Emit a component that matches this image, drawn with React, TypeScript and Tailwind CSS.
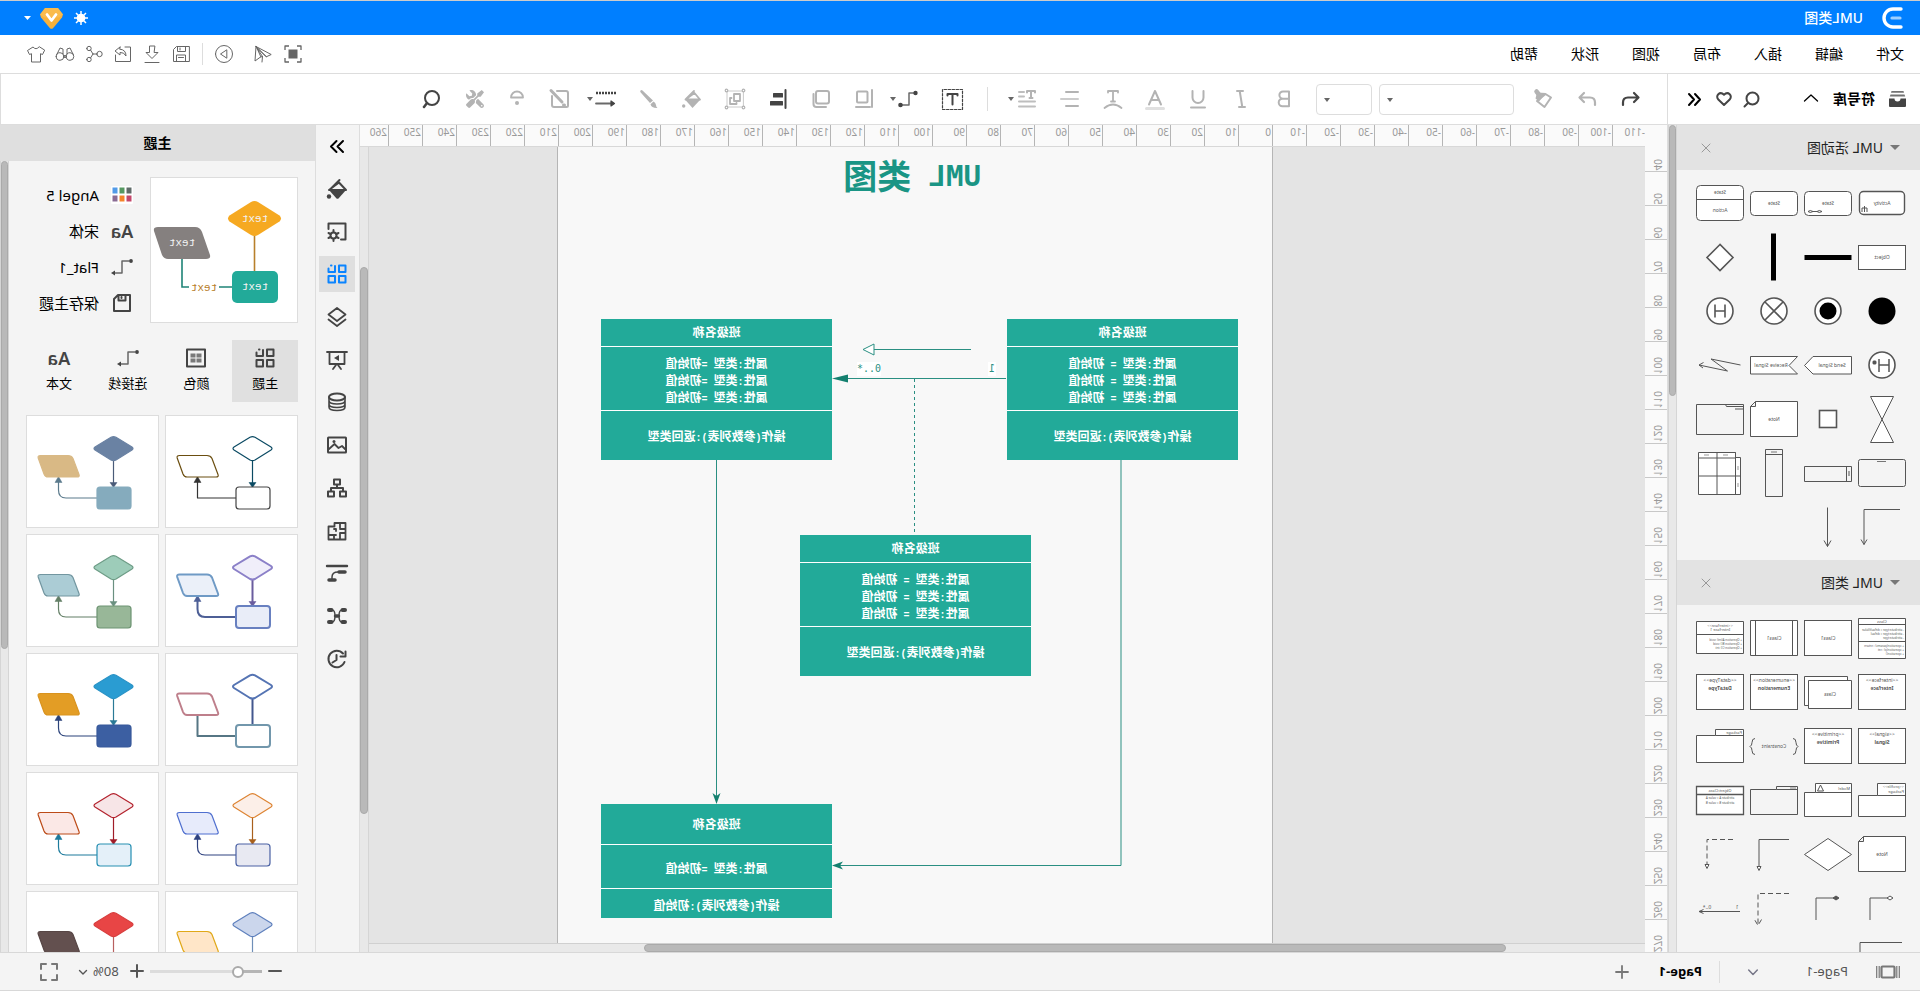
import type { FC, ReactNode } from 'react'
import { FaTools } from 'react-icons/fa'

type IconProps = {
  children: ReactNode,
  size?: string,
  box?: string,
  width?: number,
}

const Icon: FC<IconProps> = ({ children, size = 'size-5', box = '0 0 20 20', width = 2 }) => (
  <svg
    className={`${size} shrink-0 overflow-visible`}
    viewBox={box}
    fill="none"
    stroke="currentColor"
    strokeWidth={width}
    strokeLinecap="round"
    strokeLinejoin="round"
    aria-hidden="true"
  >
    {children}
  </svg>
)

const Caret: FC = () => (
  <svg className="h-1 w-1.5 shrink-0 text-[#666]" viewBox="0 0 6 4" fill="currentColor" aria-hidden="true">
    <path d="M0 0h6L3 4z" />
  </svg>
)

const fill = { fill: 'currentColor', stroke: 'none' }

/* ---------- title bar and menu ---------- */

const TitleBar: FC = () => (
  <header className="flex h-[35px] shrink-0 items-center border-t border-[#ccc] bg-[#007fff] pr-6 pl-[17px] text-white">
    <svg className="h-[22px] w-[21px]" viewBox="0 0 21 22" fill="none" stroke="#fff" strokeLinecap="round" aria-hidden="true">
      <path d="M2 2h8a9 9 0 0 1 0 18H2" strokeWidth="3.4" />
      <path d="M3 11h8" strokeWidth="3.2" stroke="#9fd0ff" />
    </svg>
    <h1 className="ml-[19px] flex-1 text-sm leading-5 font-medium">UML类图</h1>
    <button aria-label="亮度" className="mr-[11px]">
      <svg className="size-3.5" viewBox="0 0 14 14" stroke="#fff" strokeWidth="1.5" aria-hidden="true">
        <circle cx="7" cy="7" r="3.6" fill="#fff" />
        <path d="M7 0v14M0 7h14M2 2l10 10M12 2L2 12" />
      </svg>
    </button>
    <button aria-label="会员" className="mr-[9px]">
      <svg className="h-[21px] w-[23px]" viewBox="0 0 23 21" aria-hidden="true">
        <path d="M5 0h13l5 6.5-1 3-9 10.800q-1.500 1-3 0L1 9.500 0 6.500z" fill="#f7b13c" />
        <path d="M5 0h13l5 6.500-4 3H4L0 6.500z" fill="#fcc257" opacity=".6" />
        <path d="M7 6.500l4.500 6 4.500-6" fill="none" stroke="#fff" strokeWidth="2.800" strokeLinecap="round" strokeLinejoin="round" />
      </svg>
    </button>
    <button aria-label="更多">
      <svg className="h-1 w-[7px]" viewBox="0 0 7 4" fill="#fff" aria-hidden="true"><path d="M0 0h7L3.500 4z" /></svg>
    </button>
  </header>
)

const menus = ['文件', '编辑', '插入', '布局', '视图', '形状', '帮助']

const menuIcons = [
  {
    name: '专注', art: <>
      <path d="M1 5V1h4M13 1h4v4M17 13v4h-4M5 17H1v-4" strokeWidth="1.3" strokeLinecap="butt" />
      <rect x="4.5" y="4.5" width="9" height="9" {...fill} />
    </>,
  },
  { name: '发送', art: <path d="M17 9.500L1 9.500M1 9.500L17 1.500l-2 15-5-4.500zM1 9.500l5 2.500M17 1.500L7 12.500v4l3-4.500" opacity="0" /> },
  { name: '演示', art: <><circle cx="9" cy="9" r="8.5" /><path d="M6.500 5l6 4-6 4z" /></> },
  { name: '保存', art: <path d="M1 1.500h12.500l3 3v12H1zM4.500 1.500v5h8v-5M10 3v2M4.500 16.500V10h9v6.500M6.500 12.500h5" /> },
  { name: '下载', art: <path d="M6.500 1h5v6.500h3.500L9 13.500 3 7.500h3.500zM2 17.500h14" /> },
  { name: '导出', art: <path d="M7 2H1.500v14.500h15V10M12 2l5 4-5 4V7.500q-4-.5-6 3.500 0-6.500 6-6.800z" /> },
  { name: '分享', art: <><circle cx="3.500" cy="9" r="2.700" /><circle cx="14" cy="3.500" r="2.200" /><circle cx="14" cy="14.500" r="2.200" /><path d="M6 9h4M10 9l2.500-4M10 9l2.500 4" /></> },
  { name: '查找', art: <><circle cx="4" cy="11.500" r="3.800" /><circle cx="14" cy="11.500" r="3.800" /><circle cx="9" cy="11.500" r="1.200" /><path d="M.8 9.500L4 3l3 1v5M17.200 9.500L14 3l-3 1v5" /></> },
  { name: '皮肤', art: <path d="M6 2q3 3.500 6 0l5.500 3.500-2 4-2-.8V17h-9V8.700l-2 .8-2-4z" /> },
]

// paper plane: its tip points to the lower left
menuIcons[1].art = <path d="M16 1.500L.8 9.500l4.700 2.200zM16 1.500l1 14.500-5.500-4zM5.500 11.700L16 1.500 9.500 11.500l.5 5.500M9.500 11.500l2 .5" />

const MenuButton: FC<{ item: (typeof menuIcons)[number] }> = ({ item }) => (
  <button aria-label={item.name} className="text-[#666]">
    <Icon size="size-[18px]" box="0 0 18 18" width={1}>{item.art}</Icon>
  </button>
)

const MenuBar: FC = () => (
  <div className="flex h-[39px] shrink-0 items-center justify-between border-b border-[#ddd] bg-white pr-[27px] pl-4">
    <nav className="flex gap-[33px] text-sm">
      {menus.map((m) => <button key={m}>{m}</button>)}
    </nav>
    <div className="flex items-center">
      <div className="flex gap-3">
        {menuIcons.slice(0, 2).map((i) => <MenuButton key={i.name} item={i} />)}
      </div>
      <div className="mr-3 ml-[21px] flex"><MenuButton item={menuIcons[2]} /></div>
      <div className="mr-3 h-[22px] w-px bg-[#ddd]" />
      <div className="flex gap-[11px]">
        {menuIcons.slice(3).map((i) => <MenuButton key={i.name} item={i} />)}
      </div>
    </div>
  </div>
)

/* ---------- toolbar ---------- */

type Tool = {
  name: string,
  art: ReactNode,
  dark?: boolean,
  caret?: boolean,
}

const textTools: Tool[] = [
  { name: '加粗', art: <path d="M5 2.500h6a3.500 3.500 0 0 1 0 7.200H5zM5 9.700h6.500a3.700 3.700 0 0 1 0 7.600H5z" /> },
  { name: '斜体', art: <path d="M8 2h6M6 18h6M11.300 2L8.700 18" /> },
  { name: '下划线', art: <path d="M4.500 2v6.500a5.500 5.500 0 0 0 11 0V2M3 18.500h14" /> },
  { name: '字体颜色', art: <><path d="M4 15.500L10 2l6 13.500M6 11h8" /><path d="M1.500 19.500h17" stroke="#e0e0e0" strokeWidth="3" /></> },
  { name: '弯曲文字', art: <path d="M5 3.500V2h10v1.500M10 2v10.500M8 12.500h4M1.500 19q8.500-7 17 0" strokeWidth="1.800" /> },
  { name: '对齐', art: <><path d="M2 3h12M2 17h12" /><path d="M2 10h17" stroke="#ccc" /></> },
  { name: '行距', caret: true, art: <><path d="M2 3.500V2h8v1.500M6 2v7M4.500 9h3" /><path d="M13 3h5M13 7.500h5M2 12.500h16M2 17.500h16" opacity=".85" /></> },
]

const shapeTools: Tool[] = [
  { name: '置底', art: <><rect x="6.500" y="2.500" width="10.500" height="11" rx="1" /><path d="M2 1v17M4 18h14" /></> },
  { name: '层叠', art: <><rect x="2" y="2" width="13" height="12.500" rx="2" /><path d="M17.500 5v10a3 3 0 0 1-3 3H5" /></> },
  { name: '左对齐', dark: true, art: <><path d="M2.500 1v18" /><rect x="5" y="4" width="10" height="4.500" rx=".5" {...fill} /><rect x="5" y="12" width="13" height="4.500" rx=".5" {...fill} /></> },
  {
    name: '组合', art: <>
      <path d="M2 2h16v16H2z" strokeWidth="1" opacity=".7" />
      <path d="M5 5h6v7H5zM13.500 9H15v6H8.500v-1" strokeWidth="1.800" />
      <g fill="#fff" strokeWidth="1.200"><circle cx="1.500" cy="1.500" r="1.300" /><circle cx="18.500" cy="1.500" r="1.300" /><circle cx="1.500" cy="18.500" r="1.300" /><circle cx="18.500" cy="18.500" r="1.300" /></g>
    </>,
  },
  { name: '填充', art: <><path d="M8 2l8.500 8.500M7.500 4L2 10.500h14.500z" strokeWidth="1.800" /><path d="M1.500 10.500h15.500L9.500 19z" {...fill} /><circle cx="18.300" cy="17" r="1.700" {...fill} /></> },
  { name: '画笔', art: <><path d="M18.500 1.500q.7 1-.2 2L9 14l-3-2.500L16.500 1.500q1-.8 2 0z" {...fill} /><path d="M5.500 12.500l3 2.800q-1 4-7 3.700 1.500-1 1.500-3 .3-2.500 2.500-3.500z" {...fill} /></> },
  { name: '线条样式', dark: true, caret: true, art: <><path d="M0 4h20" strokeWidth="2.400" strokeDasharray="2 1" strokeLinecap="butt" /><path d="M5 14.500h15" strokeWidth="1.800" opacity=".8" /><path d="M5 12v5l-3.500-2.500z" fill="currentColor" strokeWidth="1.200" /></> },
]

const pageTools: Tool[] = [
  { name: '样式', art: <><path d="M13 2H4a2 2 0 0 0-2 2v12.500A1.500 1.500 0 0 0 3.500 18H16a2 2 0 0 0 2-2V7" /><path d="M19 1.500L8 13M5.500 16h1" strokeWidth="3" /></> },
  { name: '锁定', art: <><path d="M4 8.500a6 6 0 0 1 12 0z" strokeWidth="1.800" /><circle cx="10" cy="14" r="2" {...fill} /></> },
  { name: '工具', art: <FaTools size={18} stroke="none" x="1" y="1" /> },
  { name: '搜索', dark: true, art: <><circle cx="10" cy="9" r="7" /><path d="M15 14l3 4" strokeWidth="2.500" /></> },
]

const ToolButton: FC<{ tool: Tool }> = ({ tool }) => (
  <button
    aria-label={tool.name}
    className={`relative flex flex-1 justify-center ${tool.dark ? 'text-[#444]' : 'text-[#b3b3b3]'}`}
  >
    <Icon>{tool.art}</Icon>
    {tool.caret && <span className="absolute top-2 right-0.5"><Caret /></span>}
  </button>
)

const ToolBar: FC = () => (
  <div className="flex h-[51px] shrink-0 items-center border-r border-b border-[#ddd] bg-white">
    <div className="flex h-full w-[253px] items-center border-r border-[#ddd] pl-3.5">
      <svg className="h-4 w-[17px]" viewBox="0 0 17 16" fill="#444" aria-hidden="true">
        <path d="M2.500 0h12l.5 1.800H2zM1.500 3.500h14l.7 2H.8z" opacity=".75" />
        <path d="M0 7.500h5.500q0 3 3 3t3-3H17V15q0 1-1 1H1q-1 0-1-1z" />
      </svg>
      <h2 className="ml-3.5 text-sm font-bold">符号库</h2>
      <button aria-label="收起" className="ml-[15px]"><Icon size="size-3.5" box="0 0 14 14" width={1.3}><path d="M.5 9L7 3l6.500 6" /></Icon></button>
      <button aria-label="搜索符号" className="ml-11 text-[#444]"><Icon size="size-4" box="0 0 16 16" width={2}><circle cx="7.500" cy="7.500" r="6" /><path d="M12 12l3.500 3.500" /></Icon></button>
      <button aria-label="收藏" className="ml-3 text-[#444]"><Icon size="size-4" box="0 0 16 16" width={2}><path d="M8 14L2.300 8.500a3.700 3.700 0 0 1 0-5.300q2.700-2.500 5.700.6 3-3.100 5.700-.6a3.700 3.700 0 0 1 0 5.300z" /></Icon></button>
      <button aria-label="折叠面板" className="ml-[15px]"><Icon size="size-[13px]" box="0 0 13 13" width={2}><path d="M6 1L1 6.500 6 12M12 1L7 6.500l5 5.500" /></Icon></button>
    </div>
    <div className="ml-[26px] flex items-center gap-6">
      <button aria-label="撤销" className="text-[#444]"><Icon><path d="M7 4L2.500 8.500 7 13M3 8.500h10q5 0 5 5V16" strokeWidth="2.200" /></Icon></button>
      <button aria-label="重做" className="text-[#b3b3b3]"><Icon><path d="M13 4l4.500 4.500L13 13M17 8.500H7q-5 0-5 5V16" strokeWidth="2.200" /></Icon></button>
      <button aria-label="格式刷" className="text-[#b3b3b3]">
        <Icon><path d="M16.500 2.500L14.500 5" strokeWidth="4.500" /><path d="M7 4l9-.5 1.500 6-3.500 3z" {...fill} /><path d="M7.500 5L2 8.500l6.500 9.500L16 12z" /></Icon>
      </button>
    </div>
    <div className="ml-[19px] flex gap-[7px]">
      <div className="relative">
        <select aria-label="字体" className="h-[31px] w-[135px] appearance-none rounded border border-[#ddd] bg-white px-2" />
        <span className="pointer-events-none absolute top-3.5 right-2"><Caret /></span>
      </div>
      <div className="relative">
        <select aria-label="字号" className="h-[31px] w-14 appearance-none rounded border border-[#ddd] bg-white px-2" />
        <span className="pointer-events-none absolute top-3.5 right-2"><Caret /></span>
      </div>
    </div>
    <div className="ml-[11px] flex w-[299px]">
      {textTools.map((t) => <ToolButton key={t.name} tool={t} />)}
    </div>
    <div className="ml-[18px] h-6 w-px bg-[#ddd]" />
    <button aria-label="文本框" className="ml-6 text-[#444]">
      <Icon size="size-[21px]" box="0 0 21 21"><path d="M.5.500h20v20H.5z" strokeWidth="1.200" strokeDasharray="2.500 1.500" /><path d="M5.500 6.500V5h10v1.500M10.500 5v10.500" /></Icon>
    </button>
    <button aria-label="连接线" className="ml-6 flex items-center gap-0.5 text-[#444]">
      <Icon><path d="M3 4h6v12h8" strokeWidth="1.500" opacity=".8" /><circle cx="2.500" cy="4" r="2.200" {...fill} /><circle cx="17.500" cy="16" r="2.300" {...fill} /></Icon>
      <Caret />
    </button>
    <div className="ml-[5px] flex w-[300px]">
      {shapeTools.map((t) => <ToolButton key={t.name} tool={t} />)}
    </div>
    <div className="ml-1 flex w-[170px]">
      {pageTools.map((t) => <ToolButton key={t.name} tool={t} />)}
    </div>
  </div>
)

/* ---------- symbol library ---------- */

type TinyProps = {
  x?: number,
  y: number,
  children: string,
  size?: number,
  bold?: boolean,
  anchor?: 'start' | 'middle',
}

const Tiny: FC<TinyProps> = ({ x = 27, y, children, size = 5, bold, anchor = 'middle' }) => (
  <text x={x} y={y} fontSize={size} fontWeight={bold ? 700 : 400} textAnchor={anchor} fill="#555" stroke="none">{children}</text>
)

const activitySymbols: ReactNode[] = [
  <><rect x="4.500" y="15.500" width="45" height="23" rx="4" strokeWidth="1.400" /><Tiny y={29}>Activity</Tiny><path d="M42 36v-4h5v4M44.500 30v6" fill="none" /></>,
  <><rect x="3.500" y="15.500" width="47" height="24" rx="4" /><Tiny y={29}>State</Tiny><path d="M33 35.500q3-2 5 0h4q3-2 5 0-2 2-5 0h-4q-2 2-5 0z" fill="none" /></>,
  <><rect x="3.500" y="15.500" width="47" height="24" rx="4" /><Tiny y={29}>State</Tiny></>,
  <><rect x="3.500" y="9.500" width="47" height="35" rx="4" /><path d="M3.500 23.500h47" /><Tiny y={18}>State</Tiny><Tiny y={36}>Action</Tiny></>,
  <><rect x="3.500" y="15.500" width="47" height="24" /><Tiny y={29}>Object</Tiny></>,
  <path d="M3.500 27.500h47" stroke="#000" strokeWidth="5" />,
  <path d="M27.500 3.500v47" stroke="#000" strokeWidth="5" />,
  <path d="M27 14.500L40 27.500l-13 13-13-13z" strokeWidth="1.600" />,
  <circle cx="27" cy="27" r="13.500" fill="#000" stroke="none" />,
  <><circle cx="27" cy="27" r="13" strokeWidth="1.600" /><circle cx="27" cy="27" r="8.500" fill="#000" stroke="none" /></>,
  <><circle cx="27" cy="27" r="13" strokeWidth="1.600" /><path d="M18 18l18 18M36 18L18 36" strokeWidth="1.600" /></>,
  <><circle cx="27" cy="27" r="13" strokeWidth="1.600" /><path d="M22 20.500v13M32 20.500v13M22 27h10" strokeWidth="1.600" /></>,
  <><circle cx="27" cy="27" r="13" strokeWidth="1.600" /><path d="M20 21v13M30 21v13M20 27h10M32.500 24.500h4M34.500 22.500v4M33 23l3 3M36 23l-3 3" strokeWidth="1.500" /></>,
  <><path d="M3.500 18.500H42l8.500 9-8.500 8.500H3.500z" /><Tiny x={23} y={29}>Send Signal</Tiny></>,
  <><path d="M3.500 18.500h47V36h-47l8.500-8.500z" /><Tiny x={30} y={29}>Receive Signal</Tiny></>,
  <path d="M6.500 27L36 21 19.500 33l28.500-6M43.500 24.500L48 27l-4 3" fill="none" />,
  <path d="M15.500 4.500h23l-23 46h23z" />,
  <rect x="18.500" y="18.500" width="17" height="17" strokeWidth="1.600" />,
  <><path d="M3.500 9.500h42l5 5v30h-47zM45.500 9.500v5h5" /><Tiny y={29}>Note</Tiny></>,
  <path d="M3.500 12.500h47v30h-47zM3.500 14.500h17l1-2M4 17h8" fill="none" />,
  <><rect x="3.500" y="13.500" width="47" height="27" rx="2" fill="none" /><path d="M23 15.500h9" strokeWidth=".8" /></>,
  <path d="M3.500 20.500h47v15h-47zM8.500 20.500v15M6 25v5" fill="none" />,
  <><path d="M18.500 3.500h17v47h-17zM18.500 8.500h17" fill="none" /><path d="M24 6h6" strokeWidth=".8" /></>,
  <><path d="M6.500 11.500v37h42v-42h-37v5zM11.500 6.500v42M6.500 30h42M30 6.500v42M11.500 12h37" /><path d="M19 9h5M38 9h5M9 20v4M9 37v4" strokeWidth=".6" /></>,
  <path d="M9 9.500h36v35M42 39.500l3 5 3-5" fill="none" />,
  <path d="M27.500 7.500v39M24 40.500l3.500 6 3.500-6" fill="none" />,
]

const classSymbols: ReactNode[] = [
  <>
    <path d="M3.500 7.500h47v40h-47zM3.500 13.500h47M3.500 30.500h47" />
    <Tiny y={12} size={4}>Class</Tiny>
    <Tiny x={5} y={20} size={3} anchor="start">- attribute:type = defaultValue</Tiny>
    <Tiny x={5} y={24} size={3} anchor="start">- attribute:type = defaul</Tiny>
    <Tiny x={5} y={28} size={3} anchor="start">- attribute:type</Tiny>
    <Tiny x={5} y={36} size={3} anchor="start">+ operation(params) : return</Tiny>
    <Tiny x={5} y={40} size={3} anchor="start">+ operation(p) : ret</Tiny>
    <Tiny x={5} y={44} size={3} anchor="start">+ operation()</Tiny>
  </>,
  <><rect x="3.500" y="9.500" width="47" height="35" /><Tiny y={29}>Class1</Tiny></>,
  <><path d="M3.500 9.500h47v35h-47zM8.500 9.500v35M45.500 9.500v35" /><Tiny y={29}>Class1</Tiny></>,
  <>
    <path d="M3.500 10.500h47v32h-47zM3.500 23.500h47" />
    <Tiny y={16} size={4}>{'<<interface>>'}</Tiny>
    <Tiny y={20} size={4}>Interface 1</Tiny>
    <Tiny x={5} y={30} size={3} anchor="start">+ Operation A(int) :void</Tiny>
    <Tiny x={5} y={34} size={3} anchor="start">+ Operation B() :void</Tiny>
    <Tiny x={5} y={38} size={3} anchor="start">+ Operation C() :int</Tiny>
  </>,
  <><rect x="3.500" y="9.500" width="47" height="35" /><Tiny y={17}>{'<<interface>>'}</Tiny><Tiny y={25} bold>Interface</Tiny></>,
  <><path d="M7.500 11.500h43v29h-43z" /><path d="M3.500 15.500h43v28h-43z" /><Tiny x={25} y={31}>Class</Tiny></>,
  <><rect x="3.500" y="9.500" width="47" height="35" /><Tiny y={17}>{'<<enumeration>>'}</Tiny><Tiny y={25} bold>Enumeration</Tiny></>,
  <><rect x="3.500" y="9.500" width="47" height="35" /><Tiny y={17}>{'<<dataType>>'}</Tiny><Tiny y={25} bold>DataType</Tiny></>,
  <><rect x="3.500" y="9.500" width="47" height="35" /><Tiny y={17}>{'<<signal>>'}</Tiny><Tiny y={25} bold>Signal</Tiny></>,
  <><rect x="3.500" y="9.500" width="47" height="35" /><Tiny y={17}>{'<<primitive>>'}</Tiny><Tiny y={25} bold>Primitive</Tiny></>,
  <><path d="M8 19.500q-3 0-3 4 0 3-2 4 2 1 2 4 0 4 3 4M46 19.500q3 0 3 4 0 3 2 4-2 1-2 4 0 4-3 4" fill="none" /><Tiny y={29}>Constraint</Tiny></>,
  <><path d="M3.500 10.500h28v6h19v27h-47zM3.500 16.500h28" /><Tiny x={5} y={15} size={4} anchor="start">Package</Tiny></>,
  <><path d="M3.500 10.500h28v12h19v21h-47zM3.500 22.500h28" /><Tiny x={5} y={15} size={4} anchor="start">{'<<profile>>'}</Tiny><Tiny x={5} y={20} size={4} anchor="start">Package</Tiny></>,
  <><path d="M3.500 10.500h36v9h11v24h-47zM3.500 19.500h36M31.500 18l3-6 3 6z" /><Tiny x={5} y={17} size={4} anchor="start">Model</Tiny></>,
  <><path d="M3.500 13.500h21v3h26v25h-47zM3.500 16.500h21" fill="none" /><path d="M5 15h6" strokeWidth=".7" /></>,
  <><path d="M3.500 13.500h47v28h-47zM3.500 21.500h47" strokeWidth="1.300" /><Tiny y={19} size={4}>Object:Class</Tiny><Tiny y={26} size={3}>attribute A = value A</Tiny><Tiny y={31} size={3}>attribute B = value B</Tiny></>,
  <><path d="M3.500 9.500h42l5 5v30h-47zM45.500 9.500v5h5" /><Tiny y={29}>Note</Tiny></>,
  <path d="M3.500 27.500l23.500-16 23.500 16L27 43.500z" />,
  <><path d="M12 12.500h30v28" fill="none" /><path d="M40 39.500h4l-2 4z" /></>,
  <><path d="M14 12.500h26v26" fill="none" strokeDasharray="5 3" /><path d="M38 37.500h4l-2 4z" /></>,
  <><path d="M17 17h22v22" fill="none" /><path d="M16 17l3-2 3 2-3 2z" /></>,
  <><path d="M17 17h22v22" fill="none" /><path d="M16 17l3-2 3 2-3 2z" fill="#555" /></>,
  <path d="M12 12.500h31v32M39.500 38.500l3.500 6 3.500-6" fill="none" strokeDasharray="5 3" />,
  <><path d="M7 30.500h41M43.500 28.500l4.500 2-4.500 2" fill="none" /><Tiny x={10} y={28}>1</Tiny><Tiny x={40} y={28}>0..*</Tiny></>,
  <path d="M7 7.500h42v36" fill="none" />,
]

const SymbolSection: FC<{ title: string, symbols: ReactNode[] }> = ({ title, symbols }) => (
  <section>
    <div className="flex h-[45px] items-center bg-[#e3e3e3] pr-6 pl-5">
      <svg className="h-[5px] w-2.5" viewBox="0 0 10 5" fill="#777" aria-hidden="true"><path d="M0 0h10L5 5z" /></svg>
      <h3 className="ml-[7px] flex-1 text-sm text-[#222]">{title}</h3>
      <button aria-label={`关闭 ${title}`} className="text-[#999]">
        <Icon size="size-2.5" box="0 0 10 10" width={1}><path d="M1 1l8 8M9 1L1 9" /></Icon>
      </button>
    </div>
    <div className="grid w-[227px] grid-cols-4 py-1.5 pl-[11px]">
      {symbols.map((s, i) => (
        <svg key={i} className="size-[54px]" viewBox="0 0 54 54" fill="#fff" stroke="#555" strokeWidth="1" aria-hidden="true">
          {s}
        </svg>
      ))}
    </div>
  </section>
)

const Library: FC = () => (
  <aside className="flex w-[253px] shrink-0 border-r border-[#ddd] bg-[#f4f4f4]">
    <div className="min-h-0 flex-1 overflow-hidden">
      <SymbolSection title="UML 活动图" symbols={activitySymbols} />
      <SymbolSection title="UML 类图" symbols={classSymbols} />
    </div>
    <div className="w-[9px] border-x border-[#d5d5d5] bg-[#e8e8e8]">
      <div className="h-[271px] rounded border border-[#aaa] bg-[#b9b9b9]" />
    </div>
  </aside>
)

/* ---------- rulers and canvas ---------- */

const columns = Array.from({ length: 38 }, (_, i) => (i - 11) * 10)
const rows = Array.from({ length: 24 }, (_, i) => (i + 4) * 10)

const HorizontalRuler: FC = () => (
  <div className="flex h-[22px] shrink-0 overflow-hidden border-b border-[#d8d8d8] bg-[#fafafa]">
    {columns.map((n) => (
      <div key={n} className="mr-0.5 -ml-0.5 w-[34px] shrink-0 border-l border-[#b5b5b5] pl-px text-[10px] leading-[14px] text-[#999]">{n}</div>
    ))}
  </div>
)

const VerticalRuler: FC = () => (
  <div className="w-[22px] shrink-0 overflow-hidden bg-[#fafafa] pt-[13px]">
    {rows.map((n) => (
      <div key={n} className="flex h-[34px] items-end border-b border-[#c8c8c8] pb-px pl-[3px] text-[10px] leading-3 text-[#999]">
        <span className="rotate-180 [writing-mode:vertical-rl]">{n}</span>
      </div>
    ))}
  </div>
)

// Latin runs take half the width of a Han character
const HalfWidth: FC<{ text: string }> = ({ text }) => (
  <>
    {text.split(/([\u4e00-\u9fa5]+)/).map((part, i) => (
      i % 2 ? part : <span key={i} className="font-['Liberation_Mono',monospace] text-[10px] leading-none">{part}</span>
    ))}
  </>
)

type ClassNodeProps = {
  place: string,
  attributes: string[],
  operation: string,
  short?: boolean,
}

const ClassNode: FC<ClassNodeProps> = ({ place, attributes, operation, short }) => (
  <div className={`absolute w-[231px] bg-[#22aa99] text-center text-xs leading-[17px] font-semibold whitespace-pre text-white ${place}`}>
    <div className={`flex items-center justify-center border-b border-white ${short ? 'h-[41px]' : 'h-7'}`}>班级名称</div>
    <div className={`flex flex-col justify-center border-b border-white pt-1 ${short ? 'h-11' : 'h-16'}`}>
      {attributes.map((a, i) => <p key={i} className="h-[17px]"><HalfWidth text={a} /></p>)}
    </div>
    <div className={`flex items-center justify-center ${short ? 'h-[29px] pt-1' : 'h-[49px] pt-0.5'}`}><p className="h-[17px]"><HalfWidth text={operation} /></p></div>
  </div>
)

const spaced = '属性:类型 = 初始值'
const tight = '属性:类型 =初始值'
const operation = '操作(参数列表):返回类型'

const Sheet: FC = () => (
  <div className="relative ml-[372px] h-full w-[716px] border-x border-[#b5b5b5] bg-[#f8f8f8]">
    <svg className="absolute top-0 left-0 h-[796px] w-[714px]" viewBox="0 0 714 796" fill="none" stroke="#2a8f82" aria-hidden="true">
      <path d="M266 231.500H428M301 202.500h97M151 312v406.500H432M555.500 312v338" />
      <path d="M357.500 232v156" strokeDasharray="3 3" />
      <path d="M398 197l11 5.500-11 5.500z" fill="#fff" />
      <g fill="#14806f" stroke="none">
        <path d="M424 227.500l16 4-16 4z" />
        <path d="M429 714.500l11 4-11 4 3-4z" />
        <path d="M551.500 646l4 11 4-11-4 3z" />
      </g>
    </svg>
    <h2 className="absolute top-1.5 left-[291px] flex items-center text-[34px] leading-[46px] font-semibold text-[#1a9585]">
      <span className="font-['DejaVu_Sans_Mono',monospace] text-[29px] font-bold whitespace-pre">UML </span>类图
    </h2>
    <span className="absolute top-[215px] left-[276px] bg-white px-px font-['DejaVu_Sans_Mono',monospace] text-[10px] leading-[14px] text-[#2a8f82]">1</span>
    <span className="absolute top-[215px] left-[391px] bg-white font-['DejaVu_Sans_Mono',monospace] text-[10px] leading-[14px] text-[#2a8f82]">0..*</span>
    <ClassNode place="top-[172px] left-[34px]" attributes={[spaced, spaced, spaced]} operation={operation} />
    <ClassNode place="top-[172px] left-[440px]" attributes={[tight, tight, tight]} operation={operation} />
    <ClassNode place="top-[388px] left-[241px]" attributes={[spaced, spaced, spaced]} operation={operation} />
    <ClassNode place="top-[657px] left-[440px]" attributes={[tight]} operation="操作(参数列表):初始值" short />
  </div>
)

const Canvas: FC = () => (
  <main className="flex min-w-0 flex-1 bg-[#fafafa]">
    <VerticalRuler />
    <div className="flex min-w-0 flex-1 flex-col">
      <HorizontalRuler />
      <div className="flex min-h-0 flex-1">
        <div className="flex min-w-0 flex-1 flex-col">
          <div className="min-h-0 flex-1 overflow-hidden bg-[#e4e4e4]"><Sheet /></div>
          <div className="h-[9px] border-t border-[#d0d0d0] bg-[#e9e9e9] pl-[139px]">
            <div className="h-2 w-[862px] rounded border border-[#aaa] bg-[#b9b9b9]" />
          </div>
        </div>
        <div className="w-[9px] border-l border-[#d5d5d5] bg-[#e8e8e8] pt-[120px]">
          <div className="h-[547px] rounded border border-[#aaa] bg-[#b9b9b9]" />
        </div>
      </div>
    </div>
  </main>
)

/* ---------- right side ---------- */

const gridArt = (
  <>
    <rect x="1.500" y="1.500" width="6.500" height="6.500" /><rect x="1.500" y="12" width="6.500" height="6.500" /><rect x="12" y="12" width="6.500" height="6.500" />
    <path d="M12 2v6h6.500V4.500M15.500 1.500h.5" />
  </>
)

const panels = [
  { name: '展开', art: <path d="M4 5l5.500 5.500L4 16M10.500 5l5.500 5.500-5.500 5.500" stroke="#000" /> },
  { name: '填充样式', art: <><path d="M7.500 1l8.500 8.500M8 3.500L1 11h17z" /><path d="M1 11h17l-7.500 8.500q-1 .5-2 0z" {...fill} /><circle cx="18" cy="17.500" r="2.200" {...fill} /></> },
  { name: '页面设置', art: <><path d="M6 17.500H1.500v-16h17V7" /><circle cx="13.500" cy="13.500" r="3" /><path d="M13.500 8v2M13.500 17v2M8.500 11l2 1M16.500 15l2 1M8.500 16l2-1M16.500 12l2-1" /></> },
  { name: '主题面板', art: gridArt },
  { name: '图层', art: <path d="M10 1l8.500 6.500L10 14 1.500 7.500zM1.500 12.500L10 19l8.500-6.500" strokeWidth="1.800" /> },
  { name: '演示文稿', art: <><path d="M0 2h20M2.500 2v12h15V2M6 19l3-4M14 19l-3-4" strokeWidth="1.800" /><path d="M8 5l5 3-5 3z" {...fill} /></> },
  { name: '数据', art: <><ellipse cx="10" cy="5" rx="8" ry="3.500" /><path d="M2 5v10q0 3.500 8 3.500t8-3.500V5M2 8.500Q2 12 10 12t8-3.500M2 12q0 3.500 8 3.500T18 12" strokeWidth="1.600" /></> },
  { name: '图片', art: <><rect x="1" y="2.500" width="18" height="15" rx=".5" /><path d="M2 14l3-3 3.500 2 4-4L18 14" strokeWidth="1.800" /><circle cx="13" cy="6.500" r="1.500" {...fill} /></> },
  { name: '组织结构', art: <path d="M7 1.500h6v5H7zM1 13.500h6v5H1zM13 13.500h6v5h-6zM10 7v3M4 13v-3h12v3" /> },
  { name: '平面图', art: <path d="M1.500 2h11v3.500h6v13h-17zM7 2v5M1.500 8H7M7 12H1.500M7 12v6M11 10V8h2M11 14h7M13 14v4" strokeWidth="1.800" /> },
  { name: '甘特图', art: <><path d="M0 3h20" strokeWidth="2.400" /><path d="M9 9q6 0 6 5v2" strokeWidth="1.500" /><path d="M2 9h6M12 17h6" strokeWidth="3.500" /></> },
  { name: '思维导图', art: <><path d="M2 4h2.500M2 16h2.500M15.500 4H18M15.500 16H18" strokeWidth="4" /><path d="M5 4q3 0 3 6 0 6-3 6M15 4q-3 0-3 6 0 6 3 6" strokeWidth="1.400" /><path d="M8.500 10h3" strokeWidth="3.500" /></> },
  { name: '历史', art: <><path d="M2.500 13A8.300 8.300 0 1 0 4 4.500" /><path d="M1.500 2.500v5h5M10.500 6v5l4 2.500" /></> },
]

const PanelStrip: FC = () => (
  <div className="w-[45px] shrink-0 border-x border-[#ddd] bg-[#f4f4f4]">
    <div className="grid h-[555px] auto-rows-fr place-items-center">
      {panels.map((p) => (
        <button
          key={p.name}
          aria-label={p.name}
          className={`grid size-9 place-items-center ${p.name === '主题面板' ? 'bg-[#dfdfdf] text-[#0a84ff]' : 'text-[#444]'}`}
        >
          <Icon>{p.art}</Icon>
        </button>
      ))}
    </div>
  </div>
)

type Theme = {
  diamond: string,
  slant: string,
  box: string,
  // outlines, in the same order as the fills
  lines: [string, string, string],
  down: string,
  side: string,
  weight?: number,
  square?: boolean,
  plain?: boolean,
}

const themes: Theme[] = [
  { diamond: '#fff', slant: '#fff', box: '#fff', lines: ['#0b4a63', '#6b4e10', '#444'], down: '#0b4a63', side: '#333', square: true },
  { diamond: '#6a82a3', slant: '#d9b985', box: '#85abbd', lines: ['#6a82a3', '#d9b985', '#85abbd'], down: '#4a5b78', side: '#5b7a8c' },
  { diamond: '#f0eefa', slant: '#ebf0f9', box: '#e9edf8', lines: ['#8b80c8', '#6f9ac5', '#6880c0'], down: '#6a5d9e', side: '#4d5f96', weight: 2 },
  { diamond: '#9dccb9', slant: '#abccd5', box: '#98b798', lines: ['#6d9c86', '#7296a0', '#6d9472'], down: '#6a9080', side: '#637f66' },
  { diamond: '#fff', slant: '#fff', box: '#fff', lines: ['#5574b3', '#be7f8b', '#7297ac'], down: '#42578e', side: '#567684', weight: 2, square: true, plain: true },
  { diamond: '#2a9cd2', slant: '#e39d25', box: '#3c5fa2', lines: ['#2a93c6', '#d9931f', '#37589a'], down: '#2a7a96', side: '#2b437a' },
  { diamond: '#fcefe8', slant: '#e7ebfb', box: '#e8e9f2', lines: ['#dd8433', '#4f6fcf', '#4a61a4'], down: '#a8601c', side: '#2f4380' },
  { diamond: '#f7e5e7', slant: '#fbe8e6', box: '#e4f0f9', lines: ['#b3222d', '#bc4b18', '#268fb2'], down: '#a01c28', side: '#1c7a9c' },
  { diamond: '#cbd6ec', slant: '#ffe6c8', box: '#e4f0f9', lines: ['#5f80bd', '#e0a818', '#268fb2'], down: '#6f8fb8', side: '#e0a818' },
  { diamond: '#e84545', slant: '#63504f', box: '#555', lines: ['#d83f3f', '#574645', '#555'], down: '#b86060', side: '#555' },
]

const ThemeCard: FC<{ theme: Theme, index: number }> = ({ theme, index }) => (
  <button aria-label={`主题 ${index + 1}`} className="h-[113px] border border-[#ddd] bg-white">
    <svg className="h-[111px] w-[131px]" viewBox="1 1 131 111" strokeWidth={theme.weight ?? 1.2} strokeLinejoin="round" aria-hidden="true">
      <path d="M45.500 46v26" stroke={theme.down} fill="none" />
      <path d={theme.square ? 'M62 83h38.500V62' : 'M62 83h31q7.500 0 7.500-8V62'} stroke={theme.side} fill="none" />
      {!theme.plain && <path d="M42 67.500h7l-3.500 5z" fill={theme.down} stroke={theme.down} strokeWidth=".5" />}
      {!theme.plain && <path d="M97 67.500h7l-3.500-6z" fill={theme.side} stroke={theme.side} strokeWidth=".5" />}
      <path d="M43 22.300q2.500-1.200 5 0l16 9.700q2 1.500 0 3L48 45q-2.500 1.200-5 0L27 35q-2-1.500 0-3z" fill={theme.diamond} stroke={theme.lines[0]} />
      <path d="M91 40.500h27.500q3 0 2.300 2.500l-5.800 16q-1.200 3-4 3H82q-3 0-2-2.500l6-16q1.500-3 5-3z" fill={theme.slant} stroke={theme.lines[1]} />
      <rect x="28" y="72" width="34" height="22" rx="3" fill={theme.box} stroke={theme.lines[2]} />
    </svg>
  </button>
)

const letters = <span className="text-lg leading-5 font-semibold">Aa</span>

const stepIcon = (
  <Icon><path d="M3 4h7v12h7" strokeWidth="1.500" opacity=".8" /><circle cx="1" cy="4" r="1.900" {...fill} /><path d="M17 13.500l4 2.500-4 2.500z" {...fill} /></Icon>
)

const styles = [
  {
    name: 'Angel 5', icon: <Icon>
      <g stroke="none">
        <rect width="22" height="18" x="-1" y="1" rx="1" fill="#fff" />
        <path fill="#5f6b68" d="M.5 2.500h5v6h-5z" /><path fill="#569861" d="M7.500 2.500h5v6h-5z" /><path fill="#529be8" d="M14.500 2.500h5v6h-5z" />
        <path fill="#c3476b" d="M.5 10.500h5v6h-5z" /><path fill="#f5842a" d="M7.500 10.500h5v6h-5z" /><path fill="#8a6c95" d="M14.500 10.500h5v6h-5z" />
      </g>
    </Icon>,
  },
  { name: '宋体', icon: letters },
  { name: 'Flat_1', icon: stepIcon },
  { name: '保存主题', icon: <Icon><path d="M2 2h12l4 4v12H2zM6.500 2v5.500h7V2M10.500 4v1" /></Icon> },
]

const tabs = [
  { name: '主题', icon: <Icon>{gridArt}</Icon> },
  { name: '颜色', icon: <Icon><path d="M1 1.500h18v17H1z" /><path d="M4.500 5.500h5v4h-5zM10.500 5.500h5v4h-5zM4.500 10.500h5v4h-5zM10.500 10.500h5v4h-5z" {...fill} opacity=".7" /></Icon> },
  { name: '连接线', icon: stepIcon },
  { name: '文本', icon: letters },
]

const ThemePanel: FC = () => (
  <aside className="flex w-[315px] shrink-0 flex-col bg-[#f4f4f4]">
    <h2 className="h-9 shrink-0 bg-[#dfdfdf] text-center text-sm leading-9 font-bold">主题</h2>
    <div className="flex min-h-0 flex-1">
      <div className="min-w-0 flex-1 overflow-hidden px-[17px] pt-4">
        <div className="flex">
          <svg className="h-[146px] w-[148px] border border-[#ddd] bg-white font-['Liberation_Mono',monospace] text-[11px]" viewBox="1 1 146 144" fill="#f2f2f2" textAnchor="middle" aria-hidden="true">
            <path d="M43.500 58v37" stroke="#b8802b" strokeWidth="1.600" />
            <path d="M66 110h50V80" fill="none" stroke="#1f8477" strokeWidth="1.600" />
            <path d="M40 25q3.500-2 7 0l21.500 13.500q3 3 0 6L47 58q-3.500 2-7 0L18.500 44.500q-3-3 0-6z" fill="#f6a921" />
            <path d="M103 50h37q5 0 4 4l-8 24q-2 4-6 4H92q-5 0-4-4l8-23q2-5 7-5z" fill="#85807f" />
            <rect x="20" y="94" width="46" height="32" rx="5" fill="#22aa99" />
            <rect x="79" y="103" width="30" height="14" fill="#fff" />
            <text x="43" y="45">text</text>
            <text x="116" y="69">text</text>
            <text x="43" y="113">text</text>
            <text x="94" y="114" fill="#b8802b">text</text>
          </svg>
          <ul className="flex flex-col pl-4 text-[15px]">
            {styles.map((s) => (
              <li key={s.name} className="flex h-9 items-center gap-[11px]">
                <span className="grid w-6 place-items-center text-[#444]">{s.icon}</span>{s.name}
              </li>
            ))}
          </ul>
        </div>
        <div className="mt-[17px] grid grid-cols-4 gap-[3px]">
          {tabs.map((t, i) => (
            <button key={t.name} className={`flex h-[62px] flex-col items-center pt-2 text-[13px] leading-5 ${i === 0 ? 'bg-[#e0e0e0]' : ''}`}>
              <span className="mb-[5px] grid h-5 w-6 place-items-center text-[#444]">{t.icon}</span>
              {t.name}
            </button>
          ))}
        </div>
        <div className="mt-[13px] grid grid-cols-2 gap-1.5">
          {themes.map((t, i) => <ThemeCard key={i} theme={t} index={i} />)}
        </div>
      </div>
      <div className="w-[9px] border-x border-[#d5d5d5] bg-[#e8e8e8]">
        <div className="h-[488px] rounded border border-[#aaa] bg-[#b9b9b9]" />
      </div>
    </div>
  </aside>
)

/* ---------- status bar ---------- */

const StatusBar: FC = () => (
  <footer className="flex h-[39px] shrink-0 items-center border-y border-[#d8d8d8] bg-[#f4f4f4] pl-5 text-[13px] text-[#555]">
    <button aria-label="页面列表">
      <svg className="h-3.5 w-6" viewBox="0 0 24 14" fill="none" stroke="#777" aria-hidden="true">
        <path d="M.7 1v12M3.200 1v12M23.300 1v12M20.800 1v12" strokeWidth="1.200" /><rect x="5.500" y="1.500" width="13" height="11" rx="1" strokeWidth="2.200" />
      </svg>
    </button>
    <span className="ml-7 w-[91px]">Page-1</span>
    <button aria-label="选择页面" className="-ml-px text-[#778]"><Icon size="size-2.5" box="0 0 10 10" width={1.5}><path d="M.7 3L5 7.500 9.300 3" /></Icon></button>
    <div className="ml-7 h-[22px] w-px bg-[#ddd]" />
    <button className="ml-[17px] w-[45px] text-left font-bold text-black">Page-1</button>
    <button aria-label="新建页面" className="ml-7 text-[#777]"><Icon size="size-3.5" box="0 0 14 14" width={1.8}><path d="M7 1v12M1 7h12" /></Icon></button>
    <div className="flex flex-1 items-center justify-end pr-10">
      <button aria-label="缩小"><Icon size="size-3.5" box="0 0 14 14" width={2}><path d="M1 6h12" /></Icon></button>
      <input
        type="range"
        aria-label="缩放"
        defaultValue={18}
        className="mx-1.5 h-[3px] w-28 appearance-none bg-[linear-gradient(to_right,#b5b5b5_21%,#dcdcdc_21%)] [&::-webkit-slider-thumb]:size-3 [&::-webkit-slider-thumb]:appearance-none [&::-webkit-slider-thumb]:rounded-full [&::-webkit-slider-thumb]:border-2 [&::-webkit-slider-thumb]:border-[#aaa] [&::-webkit-slider-thumb]:bg-white"
      />
      <button aria-label="放大"><Icon size="size-3.5" box="0 0 14 14" width={2}><path d="M7 0v12M1 6h12" /></Icon></button>
      <span className="ml-[11px]">80%</span>
      <button aria-label="缩放比例" className="ml-1.5 text-[#555]"><Icon size="size-2" box="0 0 8 8" width={1.4}><path d="M.5 2.500L4 6l3.500-3.500" /></Icon></button>
      <button aria-label="全屏" className="ml-[21px] text-[#777]">
        <Icon size="size-[18px]" box="0 0 18 18"><path d="M1 6V1h5M12 1h5v5M17 12v5h-5M6 17H1v-5" /></Icon>
      </button>
    </div>
  </footer>
)

const App: FC = () => {
  return (
    <div className="flex h-screen -scale-x-100 flex-col overflow-hidden bg-white font-['Noto_Sans','Noto_Sans_CJK_SC',sans-serif] text-black">
      <TitleBar />
      <MenuBar />
      <ToolBar />
      <div className="flex min-h-0 flex-1">
        <Library />
        <Canvas />
        <PanelStrip />
        <ThemePanel />
      </div>
      <StatusBar />
    </div>
  )
}

export default App
